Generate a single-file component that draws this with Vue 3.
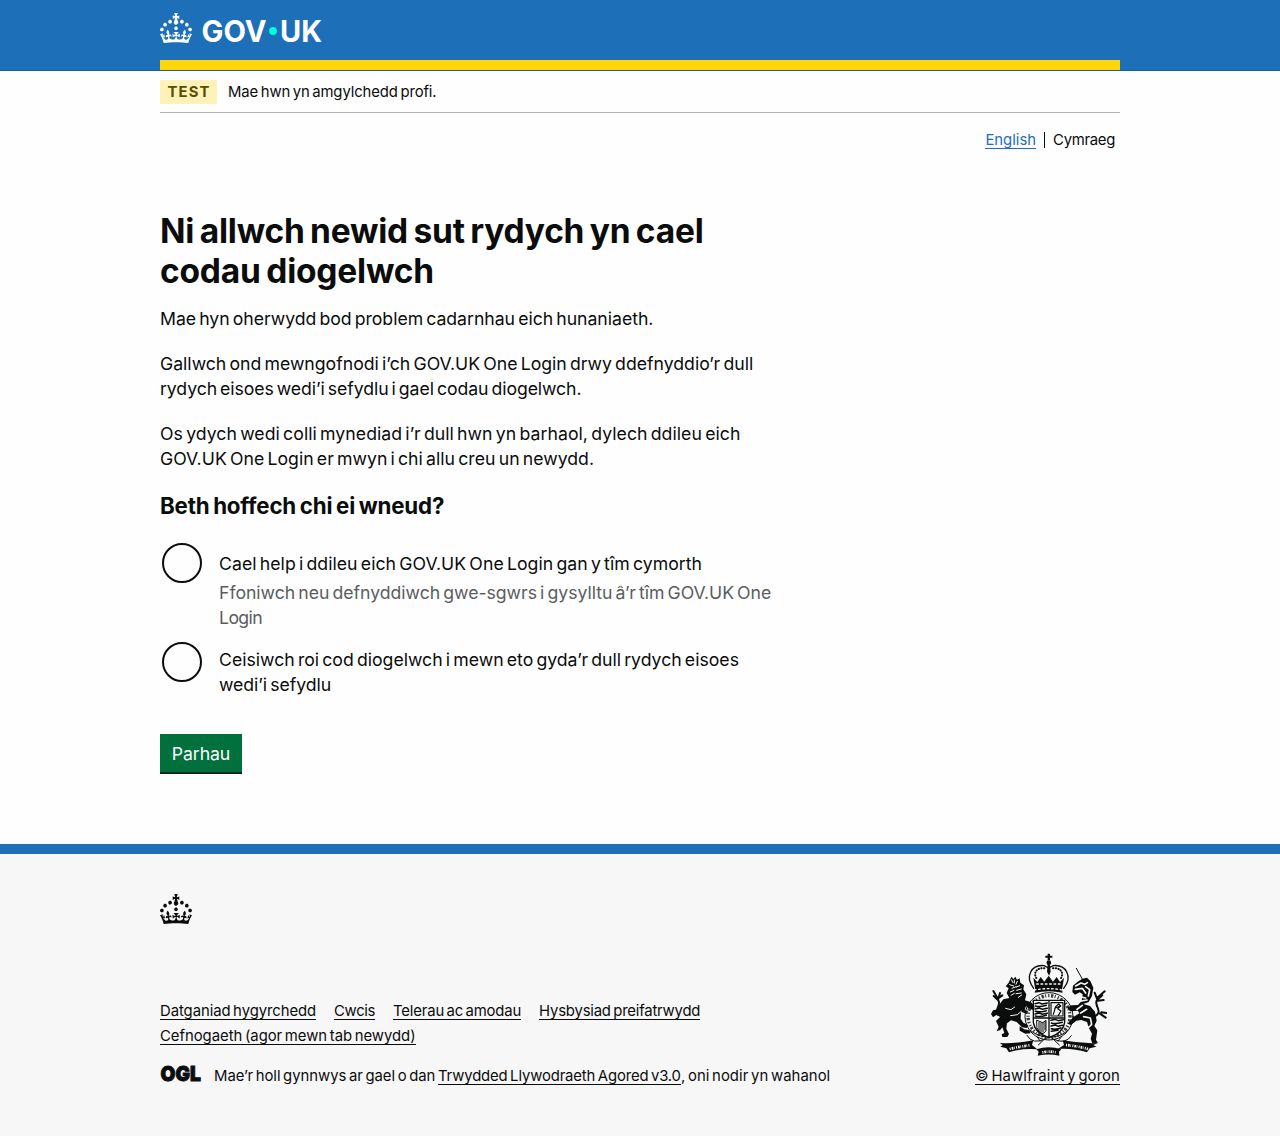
<script setup>
const crown =
  'M22.6 10.4c-1 .4-2-.1-2.4-1-.4-.9.1-2 1-2.4.9-.4 2 .1 2.4 1s-.1 2-1 2.4m-5.9 6.7c-.9.4-2-.1-2.4-1-.4-.9.1-2 1-2.4.9-.4 2 .1 2.4 1s-.1 2-1 2.4m10.8-3.7c-1 .4-2-.1-2.4-1-.4-.9.1-2 1-2.4.9-.4 2 .1 2.4 1s0 2-1 2.4m3.3 4.8c-1 .4-2-.1-2.4-1-.4-.9.1-2 1-2.4.9-.4 2 .1 2.4 1s-.1 2-1 2.4M17 4.7l2.3 1.2V2.5l-2.3.7-.2-.2.9-3h-3.4l.9 3-.2.2c-.1.1-2.3-.7-2.3-.7v3.4L15 4.7c.1.1.1.2.2.2l-1.3 4c-.1.2-.1.4-.1.6 0 1.1.8 2 1.9 2.2h.7c1-.2 1.9-1.1 1.9-2.1 0-.2 0-.4-.1-.6l-1.3-4c-.1-.2 0-.2.1-.3m-7.6 5.7c.9.4 2-.1 2.4-1 .4-.9-.1-2-1-2.4-.9-.4-2 .1-2.4 1s0 2 1 2.4m-5 3c.9.4 2-.1 2.4-1 .4-.9-.1-2-1-2.4-.9-.4-2 .1-2.4 1s.1 2 1 2.4m-3.2 4.8c.9.4 2-.1 2.4-1 .4-.9-.1-2-1-2.4-.9-.4-2 .1-2.4 1s0 2 1 2.4m14.8 11c4.4 0 8.6.3 12.3.8 1.1-4.5 2.4-7 3.7-8.8l-2.5-.9c.2 1.3.3 1.9 0 2.7-.4-.4-.8-1.1-1.1-2.3l-1.2 4c.7-.5 1.3-.8 2-.9-1.1 2.5-2.6 3.1-3.5 3-1.1-.2-1.7-1.2-1.5-2.1.3-1.2 1.5-1.5 2.1-.1 1.1-2.3-.8-3-2-2.3 1.9-1.9 2.1-3.5.6-5.6-2.1 1.6-2.1 3.2-1.2 5.5-1.2-1.4-3.2-.6-2.5 1.6.9-1.4 2.1-.5 1.9.8-.2 1.1-1.7 2.1-3.5 1.9-2.7-.2-2.9-2.1-2.9-3.6.7-.1 1.9.5 2.9 1.9l.4-4.3c-1.1 1.1-2.1 1.4-3.2 1.4.4-1.2 2.1-3 2.1-3h-5.4s1.7 1.9 2.1 3c-1.1 0-2.1-.2-3.2-1.4l.4 4.3c1-1.4 2.2-2 2.9-1.9-.1 1.5-.2 3.4-2.9 3.6-1.9.2-3.4-.8-3.5-1.9-.2-1.3 1-2.2 1.9-.8.7-2.3-1.2-3-2.5-1.6.9-2.2.9-3.9-1.2-5.5-1.5 2-1.3 3.7.6 5.6-1.2-.7-3.1 0-2 2.3.6-1.4 1.8-1.1 2.1.1.2.9-.3 1.9-1.5 2.1-.9.2-2.4-.5-3.5-3 .6 0 1.2.3 2 .9l-1.2-4c-.3 1.1-.7 1.9-1.1 2.3-.3-.8-.2-1.4 0-2.7l-2.9.9C1.3 23 2.6 25.5 3.7 30c3.7-.5 7.9-.8 12.3-.8'

// Each line carries its own tracking, in pixels.
const heading = [
  ['Ni allwch newid sut rydych yn cael', -0.22],
  ['codau diogelwch', -0.2],
]
const paragraphs = [
  [['Mae hyn oherwydd bod problem cadarnhau eich hunaniaeth.', -0.03]],
  [
    ['Gallwch ond mewngofnodi i’ch GOV.UK One Login drwy ddefnyddio’r dull', 0],
    ['rydych eisoes wedi’i sefydlu i gael codau diogelwch.', -0.08],
  ],
  [
    ['Os ydych wedi colli mynediad i’r dull hwn yn barhaol, dylech ddileu eich', 0.05],
    ['GOV.UK One Login er mwyn i chi allu creu un newydd.', 0.02],
  ],
]
const options = [
  {
    id: 'help',
    label: [['Cael help i ddileu eich GOV.UK One Login gan y tîm cymorth', 0.04]],
    hint: [
      ['Ffoniwch neu defnyddiwch gwe-sgwrs i gysylltu â’r tîm GOV.UK One', -0.03],
      ['Login', -0.6],
    ],
  },
  {
    id: 'retry',
    label: [
      ['Ceisiwch roi cod diogelwch i mewn eto gyda’r dull rydych eisoes', 0],
      ['wedi’i sefydlu', -0.05],
    ],
    hint: [],
  },
]
const links = [
  ['Datganiad hygyrchedd', -0.07],
  ['Cwcis', -0.35],
  ['Telerau ac amodau', -0.17],
  ['Hysbysiad preifatrwydd', -0.2],
  ['Cefnogaeth (agor mewn tab newydd)', -0.03],
]
const track = (n) => ({ letterSpacing: n + 'px' })
</script>

<template>
  <div class="page">
    <header class="header">
      <div class="container header-inner">
        <svg class="crown" viewBox="0 0 32 30" width="32" height="30"><path :d="crown" fill="#fff" /></svg>
        <svg class="wordmark" viewBox="0 0 130 40" width="130" height="40">
          <text x="0.5" y="29" textLength="65" lengthAdjust="spacingAndGlyphs">GOV</text>
          <circle cx="72" cy="18" r="3.9" fill="#00ffe0" />
          <text x="79" y="29" textLength="42" lengthAdjust="spacingAndGlyphs">UK</text>
        </svg>
      </div>
    </header>

    <div class="container">
      <div class="phase">
        <strong class="tag">TEST</strong>
        <span :style="track(-0.11)">Mae hwn yn amgylchedd profi.</span>
      </div>
      <nav class="lang">
        <a class="lang-link">English</a>
        <span class="lang-current" :style="track(-0.3)">Cymraeg</span>
      </nav>

      <main class="main">
        <h1><span v-for="l in heading" :key="l[0]" class="line" :style="track(l[1])">{{ l[0] }}</span></h1>
        <p v-for="(p, i) in paragraphs" :key="i">
          <span v-for="l in p" :key="l[0]" class="line" :style="track(l[1])">{{ l[0] }}</span>
        </p>
        <h2>Beth hoffech chi ei wneud?</h2>
        <div class="radios">
          <div v-for="o in options" :key="o.id" class="radio" :class="o.id">
            <span class="circle"></span>
            <div class="radio-text">
              <div class="label">
                <span v-for="l in o.label" :key="l[0]" class="line" :style="track(l[1])">{{ l[0] }}</span>
              </div>
              <div v-if="o.hint.length" class="hint">
                <span v-for="l in o.hint" :key="l[0]" class="line" :style="track(l[1])">{{ l[0] }}</span>
              </div>
            </div>
          </div>
        </div>
        <button type="button" class="button">Parhau</button>
      </main>
    </div>

    <footer class="footer">
      <div class="container">
        <svg class="crown footer-crown" viewBox="0 0 32 30" width="32" height="30"><path :d="crown" fill="#0b0c0c" /></svg>
        <div class="footer-row">
          <div class="footer-meta">
            <ul class="links">
              <li v-for="l in links" :key="l[0]"><a :style="track(l[1])">{{ l[0] }}</a></li>
            </ul>
            <div class="licence">
              <svg class="ogl" viewBox="0 0 46 26" width="46" height="26">
                <text x="0.6" y="19.2" textLength="40.4" lengthAdjust="spacingAndGlyphs">OGL</text>
              </svg>
              <span class="licence-text"><span :style="track(-0.04)">Mae’r holl gynnwys ar gael o dan </span><a :style="track(-0.14)">Trwydded Llywodraeth Agored v3.0</a><span :style="track(0.04)">, oni nodir yn wahanol</span></span>
            </div>
          </div>
          <div class="copyright">
            <svg class="arms" viewBox="60 38 351 309" width="117" height="103" fill="none" stroke="#0b0c0c" stroke-linecap="round" stroke-linejoin="round">
              <!-- royal crown -->
              <g fill="#0b0c0c" stroke="none">
                <path d="M233 40h7v6h7v6h-7v8h-7v-8h-7v-6h7z" />
                <circle cx="236.500" cy="67" r="7" />
                <path d="M190 112l12 13 10-15 11 14 13-18 13 18 11-14 10 15 12-13-6 36 2 9q-41-9-84 0l2-9z" />
                <path d="M233 72h7l2 22-5 12-6-12z" />
              </g>
              <path d="M191 144C163 108 185 72 222 76L236 83 250 76C287 72 310 108 281 144" stroke-width="4" />
              <path d="M199 113C188 95 204 80 226 84M273 113C284 95 268 80 247 84" stroke-width="6" stroke-dasharray="1 7" />
              <path d="M200 131h74M193 149q42-8 86 0" stroke="#f7f7f7" stroke-width="4" stroke-dasharray="5 8" />
              <!-- garter and shield -->
              <ellipse cx="237" cy="228" rx="72" ry="71" stroke-width="3" />
              <ellipse cx="237" cy="228" rx="63" ry="62" stroke-width="10" stroke-linecap="butt" stroke-dasharray="4 5 7 4 3 6" stroke-opacity=".8" />
              <path d="M190 180h94v66q-5 32-47 46-42-14-47-46z" fill="#f7f7f7" stroke-width="4" />
              <path d="M237 180v111M190 233h94" stroke-width="4" />
              <path d="M195 190l12-3 9 4 16-3M196 197q12 4 33-2M195 206l13-3 9 4 15-3M196 213q12 4 33-2M195 221l13-3 9 4 15-3M196 227q12 4 33-2M243 240l13-3 9 4 15-3M244 248q12 4 33-2M243 257l13-3 9 4 12-3M244 265q12 4 29-2M244 273l20-3" stroke-width="4.500" />
              <path d="M243 187h36v40h-36zM250 222l7-23 9-8 6 6-9 8 10 7-8 13M254 204l18-8" stroke-width="3.500" />
              <path d="M201 240l17 7 10-7v31q-5 9-12 9-9-3-15-17zM207 246v27M213 247v29M219 247v28M225 244v25" stroke-width="3" />
              <!-- lion -->
              <g fill="#0b0c0c" stroke="none">
                <path d="M116 127l8-18 6 7 6-7 5 9 8-4 2 13 11 8-2 12 9 15-4 18 18 6 11 14-5 9-14-5-7-7-4 12 10 4-3 8-18-7-1 21 8 12 14 7-4 9-14-2-16-16-17-5-12 9-2 16 8 16-5 9h-15l-2-8 8-4-6-17-6 8-11 4 6-14-8-17 13-13-12-5-10 7-6-10 6-11 14-3 4-13 13-17 18-4-8-15 6-14-9-6z" />
                <path d="M149 258l14 9 15 3 4 9-16 1-17-9z" />
              </g>
              <path d="M90 226C64 214 98 194 84 179L71 167M84 179L90 158M82 172L70 152M84 174L97 165" stroke-width="6" />
              <path d="M124 118l5 9M133 119v9M142 123l-4 9M119 133l12 4M126 144l12-5M121 155l11-5M123 165l10-6M139 140l10-4M140 150l14-4M138 160l16-2M145 171l10-7M107 204l16 4 11-8M122 226l20-3 12-10" stroke="#f7f7f7" stroke-width="3" />
              <!-- unicorn -->
              <path d="M319 84L338 118" stroke-width="3" />
              <g fill="#0b0c0c" stroke="none">
                <path d="M309 136l13-11 15-10 14-3 10 10 9 20-4 25-10 18-16 6 20 6 15 17 5 27-7 16 9 13-4 29 6 8-17 2-5-14 4-15-9-16-6-19-17-6-15 2-16 13-10-4 16-19 19-12-4-8-24 2-8-10 12-8 20-1 11-12 3-20-9-6-14 7-8-8z" />
              </g>
              <path d="M372 229C404 215 369 194 381 179L397 165M382 178L374 157M382 172L404 153M384 181L401 179M390 220L407 232M394 216L409 218" stroke-width="6" />
              <path d="M317 137l16-9 11 4 8-5M316 147l21-3 10 14M347 139l12 9-4 19M326 183l25-4M333 170l14 3M341 229l20 4 4 19-14 14-12 28 12 9M313 251l25 5M350 207l-18 11M321 207l16-12" stroke="#f7f7f7" stroke-width="5" />
              <!-- compartment and motto scroll -->
              <path d="M171 285q16 30 57 10l10-9 9 9q40 20 57-9M180 269q14 14 49 22l-24 23M294 269q-15 18-50 22l24 23M202 290l8 12M274 290l-10 12" stroke-width="3" />
              <g fill="#0b0c0c" stroke="none">
                <path d="M89 308l18 1q42-1 83-9l-4 14 16 13q-44-4-85 9l-8-12-18-5 7-5z" />
                <path d="M384 308l-18 1q-42-1-88-9l4 14-19 12q47-3 88 10l8-12 20-5-9-5z" />
                <path d="M199 327q37-12 75 0l-7 7 1 12q-32-7-65 0l3-12z" />
              </g>
              <path d="M119 326q32-8 62-11M288 314q34 3 66 12M217 336q20-4 40 0" stroke="#f7f7f7" stroke-width="8" stroke-linecap="butt" stroke-dasharray="3 3 5 2 2 4" />
            </svg>
            <a :style="track(0.1)">© Hawlfraint y goron</a>
          </div>
        </div>
      </div>
    </footer>
  </div>
</template>

<style>
body {
  background: #f7f7f7;
}
</style>

<style scoped>
.page {
  min-height: 1136px;
  display: flex;
  flex-direction: column;
  background: #fefefe;
  color: #0b0c0c;
  font-family: Inter, 'Liberation Sans', sans-serif;
  font-size: 14.88px;
  line-height: 20px;
  word-spacing: -1.5px;
}
.container {
  width: 960px;
  margin: 0 auto;
}
.header {
  height: 70px;
  background: #1d70b8;
  border-bottom: 1px solid #1b5f9c;
}
.header-inner {
  display: flex;
  align-items: flex-start;
  padding-top: 13px;
  box-sizing: border-box;
  height: 70px;
  border-bottom: 10px solid #ffd60a;
}
.crown {
  display: block;
}
.wordmark {
  margin-left: 9px;
  overflow: visible;
  fill: #fff;
  font-family: Inter, sans-serif;
  font-weight: 700;
  font-size: 29.5px;
  line-height: 1;
  word-spacing: 0;
}
.phase {
  display: flex;
  align-items: center;
  height: 41px;
  border-bottom: 1px solid #b1b4b6;
}
.tag {
  width: 57px;
  height: 24px;
  line-height: 24px;
  margin-right: 11px;
  background: #fff2b8;
  color: #594d00;
  text-align: center;
  font-weight: 700;
  letter-spacing: 1.1px;
  text-indent: 1px;
}
.lang {
  display: flex;
  justify-content: flex-end;
  padding: 17px 5px 0 0;
  line-height: 20px;
}
.lang-link {
  color: #1d70b8;
  height: 18px;
  line-height: 20px;
  border-bottom: 1px solid #1d70b8;
}
.lang-current {
  position: relative;
  padding-left: 17px;
}
.lang-current::before {
  content: '';
  position: absolute;
  left: 8px;
  top: 2px;
  width: 1px;
  height: 16px;
  background: #0b0c0c;
}
.main {
  padding-top: 61px;
  width: 640px;
  font-size: 17.67px;
  line-height: 25px;
  word-spacing: -1.8px;
}
.line {
  display: block;
  white-space: nowrap;
}
h1 {
  margin: 0 0 15px;
  font-size: 33.5px;
  line-height: 40px;
  font-weight: 700;
  word-spacing: -2.2px;
}
p {
  margin: 0 0 20px;
}
h2 {
  margin: 0 0 20px;
  font-size: 22.3px;
  line-height: 30px;
  font-weight: 700;
  word-spacing: -1.3px;
  letter-spacing: -0.19px;
}
.radio {
  display: flex;
  padding-left: 2px;
  height: 99px;
}
.circle {
  flex: none;
  box-sizing: border-box;
  width: 40px;
  height: 40px;
  margin: 2px 17px 0 0;
  border: 2px solid #0b0c0c;
  border-radius: 50%;
}
.help .label {
  padding-top: 10px;
}
.retry .label {
  padding-top: 7px;
}
.hint {
  padding-top: 4px;
  color: #5a5d5f;
}
.retry {
  height: 94px;
}
.button {
  display: block;
  width: 82px;
  height: 38px;
  padding: 1px 0 0;
  border: 0;
  background: #00703c;
  box-shadow: 0 2px 0 #002d18;
  color: #fff;
  font: inherit;
  line-height: 38px;
  letter-spacing: -0.1px;
}
.footer {
  margin-top: 72px;
  flex: 1;
  border-top: 10px solid #1d70b8;
  background: #f7f7f7;
}
.footer-crown {
  margin-top: 40px;
}
.footer-row {
  display: flex;
  justify-content: space-between;
  align-items: flex-end;
  margin-top: 29px;
}
.footer a {
  border-bottom: 1px solid #0b0c0c;
  display: inline-block;
  height: 18px;
  line-height: 20px;
}
.links {
  display: flex;
  flex-wrap: wrap;
  width: 600px;
  margin: 0 0 15px;
  padding: 0;
  list-style: none;
  column-gap: 18px;
}
.links li {
  height: 25px;
}
.licence {
  display: flex;
  height: 20px;
}
.ogl {
  margin: -4px 8px 0 0;
  overflow: visible;
  font-family: Inter, sans-serif;
  font-weight: 900;
  font-size: 20.5px;
  line-height: 1;
  fill: #0b0c0c;
  stroke: #0b0c0c;
  stroke-width: 0.9;
}
.licence-text {
  white-space: pre;
}
.copyright {
  display: flex;
  flex-direction: column;
  align-items: flex-end;
  white-space: nowrap;
}
.arms {
  display: block;
  margin: 0 13px 10px 0;
}
.copyright a {
  margin-bottom: 1px;
}
</style>
